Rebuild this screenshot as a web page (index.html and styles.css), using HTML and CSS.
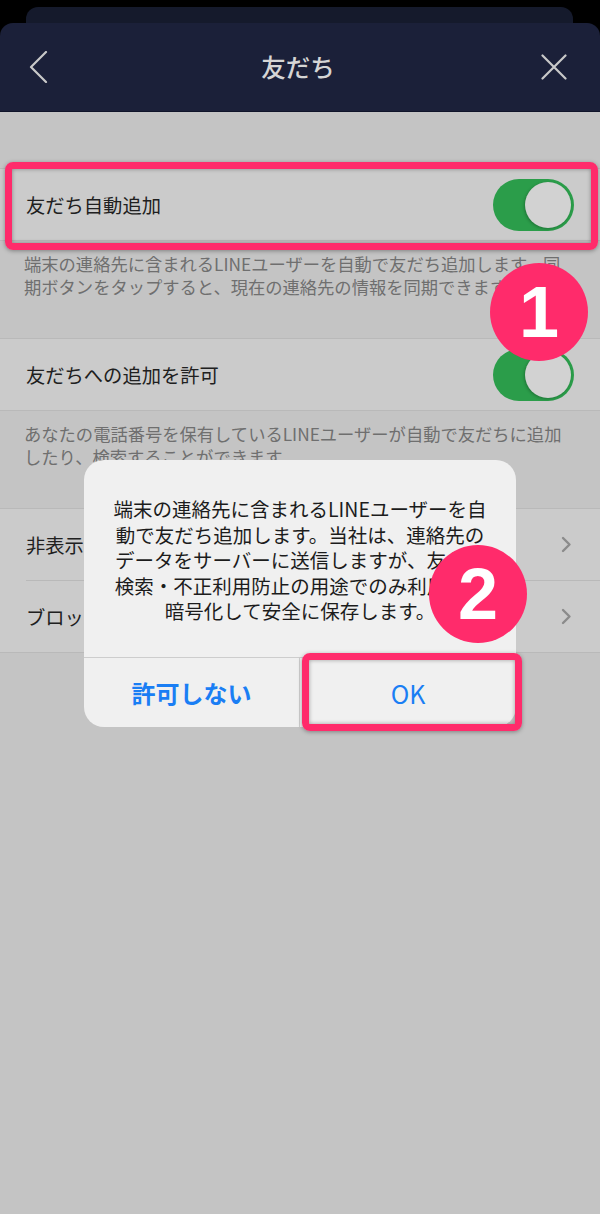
FILE: index.html
```html
<!DOCTYPE html>
<html lang="ja">
<head>
<meta charset="utf-8">
<title>友だち</title>
<link rel="stylesheet" href="styles.css">
</head>
<body>
<div class="screen">
  <div class="backcard"></div>
  <header class="header">
    <svg class="nav-icon back" width="20" height="32" viewBox="0 0 20 32"><polyline points="17,1 2,16 17,31" fill="none" stroke="#c9c9c9" stroke-width="2.2" stroke-linecap="round" stroke-linejoin="round"/></svg>
    <h1 class="title">友だち</h1>
    <svg class="nav-icon close" width="26" height="26" viewBox="0 0 26 26"><path d="M1.5 1.5 L24.5 24.5 M24.5 1.5 L1.5 24.5" fill="none" stroke="#c9c9c9" stroke-width="2.2" stroke-linecap="round"/></svg>
  </header>
  <main class="content">
    <section class="group">
      <div class="row"><span class="label">友だち自動追加</span><span class="toggle"><span class="knob"></span></span></div>
    </section>
    <p class="desc">端末の連絡先に含まれるLINEユーザーを自動で友だち追加します。同<br>期ボタンをタップすると、現在の連絡先の情報を同期できます。</p>
    <section class="group">
      <div class="row"><span class="label">友だちへの追加を許可</span><span class="toggle"><span class="knob"></span></span></div>
    </section>
    <p class="desc">あなたの電話番号を保有しているLINEユーザーが自動で友だちに追加<br>したり、検索することができます。</p>
    <section class="group">
      <div class="row"><span class="label">非表示リスト</span><svg class="chev" width="11" height="17" viewBox="0 0 11 17"><polyline points="2,2 8.5,8.5 2,15" fill="none" stroke="#8b8b8b" stroke-width="2.4" stroke-linecap="round" stroke-linejoin="round"/></svg></div>
      <div class="row sep"><span class="label">ブロックリスト</span><svg class="chev" width="11" height="17" viewBox="0 0 11 17"><polyline points="2,2 8.5,8.5 2,15" fill="none" stroke="#8b8b8b" stroke-width="2.4" stroke-linecap="round" stroke-linejoin="round"/></svg></div>
    </section>
  </main>

  <div class="highlight hl-1"></div>
  <div class="badge badge-1">1</div>

  <div class="dialog">
    <p class="dialog-msg">端末の連絡先に含まれるLINEユーザーを自<br>動で友だち追加します。当社は、連絡先の<br>データをサーバーに送信しますが、友だち<br>検索・不正利用防止の用途でのみ利用し、<br>暗号化して安全に保存します。</p>
    <div class="dialog-actions">
      <button class="btn btn-deny">許可しない</button>
      <button class="btn btn-ok">OK</button>
    </div>
  </div>

  <div class="highlight hl-2"></div>
  <div class="badge badge-2">2</div>
</div>
</body>
</html>
```

FILE: styles.css
```css
* { box-sizing: border-box; }
html, body { margin: 0; padding: 0; }
body {
  background: #000;
  font-family: "Noto Sans CJK JP", "Noto Sans", sans-serif;
  width: 600px;
  height: 1214px;
  overflow: hidden;
}
.screen {
  position: relative;
  width: 600px;
  height: 1214px;
  display: flex;
  flex-direction: column;
  padding-top: 7px;
}
.backcard {
  height: 16px;
  margin: 0 27px 0 26px;
  background: #151a2c;
  border-radius: 12px 12px 0 0;
}
.header {
  height: 89px;
  background: #1b2039;
  border-radius: 13px 13px 0 0;
  border-bottom: 1px solid #10142a;
  display: grid;
  grid-template-columns: 1fr auto 1fr;
  align-items: center;
  padding: 0 33px 0 29px;
}
.nav-icon.back { justify-self: start; }
.nav-icon.close { justify-self: end; }
.title {
  margin: 0;
  font-size: 24.5px;
  font-weight: 500;
  color: #d5d5d5;
  line-height: 1;
}
.content {
  flex: 1;
  background: #c4c4c4;
  padding-top: 56px;
}
.group {
  background: #cbcbcb;
  border-top: 1px solid #b9b9b9;
  border-bottom: 1px solid #b9b9b9;
}
.row {
  height: 71px;
  display: flex;
  align-items: center;
  justify-content: space-between;
  padding: 0 26px 0 26px;
  position: relative;
}
.row.sep::before {
  content: "";
  position: absolute;
  left: 26px;
  right: 0;
  top: -1px;
  height: 1px;
  background: #b9b9b9;
}
.row.sep { margin-top: 1px; }
.label {
  font-size: 19.3px;
  color: #202020;
  white-space: nowrap;
}
.toggle {
  width: 81px;
  height: 52px;
  border-radius: 26px;
  background: #2b9d4a;
  display: flex;
  justify-content: flex-end;
  align-items: center;
  padding-right: 3px;
}
.knob {
  width: 46px;
  height: 46px;
  border-radius: 50%;
  background: #d2d2d2;
  box-shadow: -1px 1px 3px rgba(0,0,0,0.25);
}
.chev { margin-right: 2px; }
.desc {
  margin: 0;
  padding: 11px 20px 40px 24px;
  font-size: 17.3px;
  line-height: 23px;
  color: #6f6f6f;
  white-space: nowrap;
}

.highlight {
  position: absolute;
  border: 7px solid #ff2b6b;
  border-radius: 8px;
  box-shadow: 0 1px 4px rgba(0,0,0,0.35), inset 0 0 4px rgba(0,0,0,0.35);
}
.hl-1 { left: 5px; top: 162px; width: 593px; height: 88px; }
.hl-2 { left: 302px; top: 653px; width: 220px; height: 78px; z-index: 3; }

.badge {
  position: absolute;
  width: 98px;
  height: 98px;
  border-radius: 50%;
  background: #ff2b6b;
  color: #fff;
  font-family: "Liberation Sans", Arial, sans-serif;
  font-weight: 700;
  font-size: 72px;
  line-height: 98px;
  text-align: center;
  z-index: 4;
}
.badge-1 { left: 490px; top: 263px; }
.badge-2 { left: 429px; top: 545px; }

.dialog {
  position: absolute;
  left: 84px;
  top: 460px;
  width: 432px;
  height: 267px;
  background: #f0f0f0;
  border-radius: 20px;
  display: flex;
  flex-direction: column;
  z-index: 2;
}
.dialog-msg {
  margin: 0;
  padding: 36px 10px 0;
  height: 197px;
  text-align: center;
  font-size: 19.5px;
  line-height: 25.5px;
  color: #1c1c1c;
  white-space: nowrap;
}
.dialog-actions {
  flex: 1;
  display: grid;
  grid-template-columns: 1fr 1fr;
  border-top: 1px solid #cdcdcd;
}
.btn {
  border: 0;
  background: transparent;
  font-family: "Noto Sans CJK JP", "Noto Sans", sans-serif;
  color: #1a7ef4;
  font-size: 24px;
  padding: 0;
  margin: 0;
}
.btn-deny { font-weight: 700; border-right: 1px solid #cdcdcd; }
.btn-ok { font-weight: 400; font-size: 25px; }
```
